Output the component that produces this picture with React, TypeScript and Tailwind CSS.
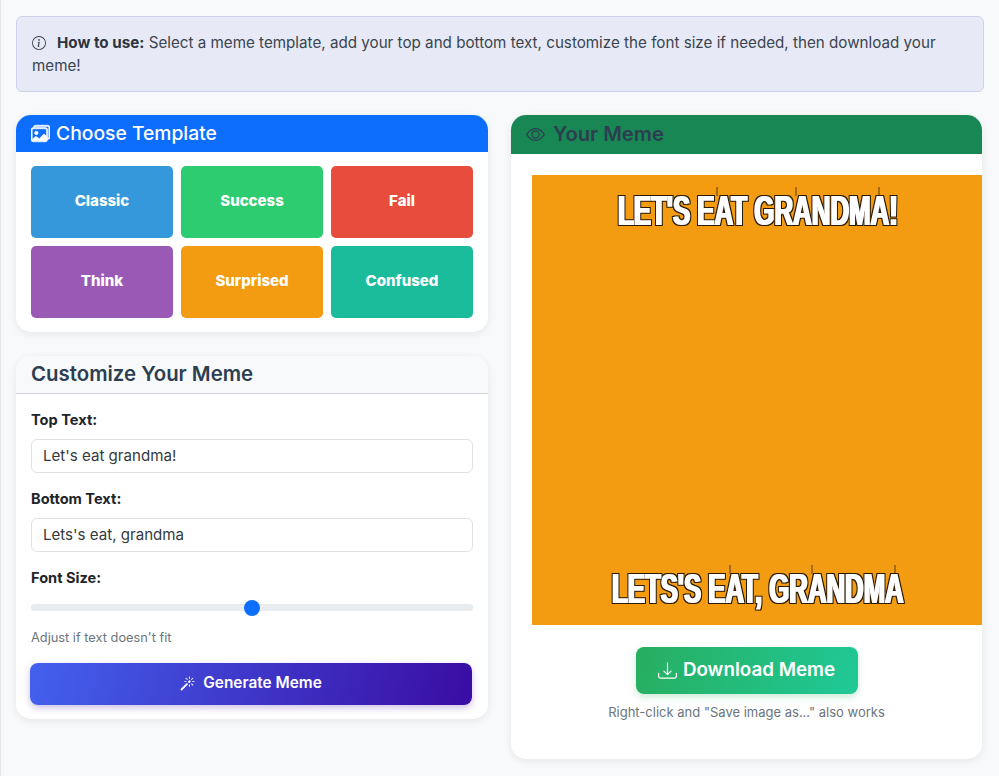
import { BsDownload, BsEye, BsImages, BsInfoCircle, BsMagic } from "react-icons/bs";

const templates = [
  { name: "Classic", color: "bg-[#3498db]" },
  { name: "Success", color: "bg-[#2ecc71]" },
  { name: "Fail", color: "bg-[#e74c3c]" },
  { name: "Think", color: "bg-[#9b59b6]" },
  { name: "Surprised", color: "bg-[#f39c12]" },
  { name: "Confused", color: "bg-[#1abc9c]" },
];

function Field({ label, value }: { label: string; value: string }) {
  return (
    <div className="mb-[16px]">
      <label className="mb-[8px] block text-[14.6px] leading-[21px] font-bold text-[#212529]">{label}</label>
      <input
        readOnly
        value={value}
        className="h-[34px] w-full rounded-[6px] border border-[#dee2e6] bg-white px-[11px] pb-[2px] text-[15.1px] text-[#343a40]"
      />
    </div>
  );
}

function MemeImage() {
  const textProps = {
    fontFamily: "'Liberation Sans', sans-serif",
    fontWeight: 700,
    fontSize: 42,
    fill: "#fff",
  };
  return (
    <svg width="450" height="450" viewBox="0 0 450 450" className="block shrink-0">
      <defs>
        <filter id="memeStroke" x="0" y="0" width="450" height="450" filterUnits="userSpaceOnUse" colorInterpolationFilters="sRGB">
          <feMorphology in="SourceGraphic" operator="dilate" radius="1.2 0.2" result="thick" />
          <feMorphology in="thick" operator="dilate" radius="1.1" result="outer" />
          <feFlood floodColor="#2a1a06" result="ink" />
          <feComposite in="ink" in2="outer" operator="in" result="outline" />
          <feMerge result="merged">
            <feMergeNode in="outline" />
            <feMergeNode in="thick" />
          </feMerge>
          <feGaussianBlur in="merged" stdDeviation="0.4" />
        </filter>
      </defs>
      <rect width="450" height="450" fill="#f39c12" />
      <g stroke="#5a3a10" strokeWidth="1">
        <line x1="185" y1="12" x2="185" y2="21" />
        <line x1="264" y1="12" x2="264" y2="21" />
        <line x1="347" y1="12" x2="347" y2="21" />
        <line x1="198" y1="390" x2="198" y2="399" />
        <line x1="280" y1="390" x2="280" y2="399" />
        <line x1="363" y1="390" x2="363" y2="399" />
      </g>
      <g filter="url(#memeStroke)">
        <text transform="translate(86 50) scale(0.66 1)" textLength={424} lengthAdjust="spacingAndGlyphs" {...textProps}>
          LET'S EAT GRANDMA!
        </text>
        <text transform="translate(80 428) scale(0.66 1)" textLength={442} lengthAdjust="spacingAndGlyphs" {...textProps}>
          LETS'S EAT, GRANDMA
        </text>
      </g>
    </svg>
  );
}

export default function App() {
  return (
    <div className="min-h-[776px] w-full overflow-hidden border-l border-[#e3e5e8] bg-[#f8f9fa] px-[15px] pt-[16px] pb-[17px] font-['Inter',sans-serif] text-[#343a40]">
      <div className="mb-[23px] h-[76px] rounded-[6px] border border-[#cdd2e8] bg-[#e7eaf6] px-[15px] py-[14px] text-[15.2px] leading-[23px] text-[#3a4450]">
        <BsInfoCircle className="mr-[11px] inline-block h-[14px] w-[14px] align-[-2px]" />
        <strong className="font-bold text-[#2c3540]">How to use:</strong> Select a meme template, add your top and bottom text, customize the font size if needed, then download your meme!
      </div>

      <div className="grid grid-cols-[472px_471px] gap-x-[23px]">
        <div className="flex flex-col gap-[24px]">
          <section className="overflow-hidden rounded-[15px] bg-white shadow-[0_2px_8px_rgba(0,0,0,0.08)]">
            <div className="flex h-[37px] items-center gap-[6px] bg-[#0d6efd] px-[15px] text-white">
              <BsImages className="h-[19px] w-[19px]" stroke="currentColor" strokeWidth={0.5} />
              <h2 className="text-[19.3px] font-medium">Choose Template</h2>
            </div>
            <div className="grid grid-cols-3 gap-[8px] px-[15px] pt-[14px] pb-[14px]">
              {templates.map((t) => (
                <div
                  key={t.name}
                  className={`${t.color} flex h-[72px] items-center justify-center rounded-[5px] pb-[1px] text-[15px] font-extrabold text-white`}
                >
                  {t.name}
                </div>
              ))}
            </div>
          </section>

          <section className="overflow-hidden rounded-[15px] bg-white shadow-[0_2px_8px_rgba(0,0,0,0.08)]">
            <div className="flex h-[38px] items-center border-b border-[#cfd2d6] bg-[#f8f9fa] px-[15px]">
              <h2 className="text-[20.4px] font-semibold text-[#2c3e50]">Customize Your Meme</h2>
            </div>
            <div className="px-[15px] pt-[16px] pb-[14px]">
              <Field label="Top Text:" value="Let's eat grandma!" />
              <Field label="Bottom Text:" value="Lets's eat, grandma" />
              <label className="mb-[15px] block text-[14.6px] leading-[21px] font-bold text-[#212529]">Font Size:</label>
              <input
                type="range"
                readOnly
                value={50}
                className="block h-[7px] w-full appearance-none rounded-full bg-[#e9ecef] [&::-webkit-slider-thumb]:h-[16px] [&::-webkit-slider-thumb]:w-[16px] [&::-webkit-slider-thumb]:appearance-none [&::-webkit-slider-thumb]:rounded-full [&::-webkit-slider-thumb]:bg-[#0d6efd]"
              />
              <p className="mt-[18px] text-[12.8px] leading-[18px] text-[#6c757d]">Adjust if text doesn't fit</p>
              <button className="-ml-px mt-[16px] flex h-[42px] w-[442px] items-center justify-center gap-[8px] rounded-[8px] bg-[linear-gradient(105deg,#4361ee,#3a0ca3)] pb-[2px] text-[15.4px] font-semibold text-white shadow-[0_3px_7px_rgba(58,12,163,0.25)]">
                <BsMagic className="h-[15px] w-[15px]" />
                Generate Meme
              </button>
            </div>
          </section>
        </div>

        <section className="h-[644px] overflow-hidden rounded-[15px] bg-white shadow-[0_2px_8px_rgba(0,0,0,0.08)]">
          <div className="flex h-[39px] items-center gap-[8px] bg-[#198754] px-[15px] text-[#2c3e50]">
            <BsEye className="h-[19px] w-[19px]" />
            <h2 className="text-[20.2px] font-semibold">Your Meme</h2>
          </div>
          <div className="flex flex-col pt-[21px]">
            <div className="overflow-hidden pl-[21px]">
              <MemeImage />
            </div>
            <div className="flex flex-col items-center">
              <button className="mt-[22px] flex h-[47px] w-[222px] items-center justify-center gap-[6px] rounded-[8px] bg-[linear-gradient(105deg,#27ae60,#20c997)] text-[18.8px] font-semibold text-white shadow-[0_3px_7px_rgba(39,174,96,0.25)]">
                <BsDownload className="h-[19px] w-[19px]" />
                Download Meme
              </button>
              <p className="mt-[9px] text-[13px] leading-[18px] text-[#6c757d]">Right-click and "Save image as..." also works</p>
            </div>
          </div>
        </section>
      </div>
    </div>
  );
}
